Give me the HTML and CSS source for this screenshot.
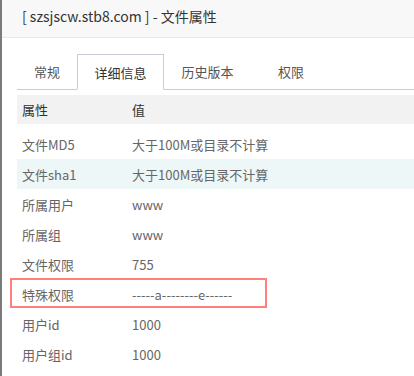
FILE: index.html
```html
<!DOCTYPE html>
<html lang="zh-CN">
<head>
    <meta charset="UTF-8">
    <meta name="viewport" content="width=device-width, initial-scale=1.0">
    <title>文件属性</title>
    <link rel="stylesheet" href="styles.css">
</head>
<body>
    <div class="layer">
        <div class="layer-title">[ szsjscw.stb8.com ] - 文件属性</div>

        <div class="layer-content">
            <ul class="tab-title">
                <li>常规</li>
                <li class="this">详细信息</li>
                <li>历史版本</li>
                <li>权限</li>
            </ul>

            <div class="table">
                <div class="row head">
                    <div class="cell name">属性</div>
                    <div class="cell">值</div>
                </div>
                <div class="body">
                    <div class="row">
                        <div class="cell name">文件MD5</div>
                        <div class="cell">大于100M或目录不计算</div>
                    </div>
                    <div class="row hover">
                        <div class="cell name">文件sha1</div>
                        <div class="cell">大于100M或目录不计算</div>
                    </div>
                    <div class="row">
                        <div class="cell name">所属用户</div>
                        <div class="cell">www</div>
                    </div>
                    <div class="row">
                        <div class="cell name">所属组</div>
                        <div class="cell">www</div>
                    </div>
                    <div class="row">
                        <div class="cell name">文件权限</div>
                        <div class="cell">755</div>
                    </div>
                    <div class="row marked">
                        <div class="cell name">特殊权限</div>
                        <div class="cell">-----a--------e------</div>
                    </div>
                    <div class="row">
                        <div class="cell name">用户id</div>
                        <div class="cell">1000</div>
                    </div>
                    <div class="row">
                        <div class="cell name">用户组id</div>
                        <div class="cell">1000</div>
                    </div>
                </div>
            </div>
        </div>
    </div>
</body>
</html>
```

FILE: styles.css
```css
html, body {
    margin: 0;
    padding: 0;
    background: #fff;
}
body {
    font-family: "Noto Sans CJK SC", "Noto Sans", sans-serif;
    color: #666;
}
.layer {
    height: 376px;
    border-left: 2px solid #7a7a7a;
    box-sizing: border-box;
    overflow: hidden;
}
.layer-title {
    height: 37px;
    line-height: 33px;
    padding-left: 20px;
    font-size: 14px;
    color: #333;
    background-color: #f8f8f8;
    border-bottom: 1px solid #e8e8e8;
}
.layer-content {
    padding: 16px 0 0 15px;
}
.tab-title {
    list-style: none;
    margin: 0;
    padding: 0;
    display: flex;
    height: 35px;
    border-bottom: 1px solid #cdc9da;
}
.tab-title li {
    width: 60px;
    text-align: center;
    font-size: 13px;
    line-height: 36px;
    color: #555;
    box-sizing: border-box;
}
.tab-title li:nth-child(2),
.tab-title li:nth-child(3) {
    width: 87px;
}
.tab-title li:nth-child(4) {
    width: 80px;
}
.tab-title .this {
    color: #333;
    background: #fff;
    border: 1px solid #cdc9da;
    border-bottom-color: #fff;
    height: 36px;
}
.table {
    margin-top: 5px;
    font-size: 13px;
}
.row {
    display: flex;
    height: 30px;
    align-items: center;
}
.head {
    height: 29px;
    background-color: #f2f2f2;
    color: #333;
}
.body {
    padding-top: 5px;
}
.cell {
    padding-left: 5px;
}
.cell.name {
    width: 105px;
}
.hover {
    background-color: #eef7f7;
}
.marked {
    position: relative;
}
.marked::after {
    content: "";
    position: absolute;
    left: -7px;
    top: -1px;
    width: 257px;
    height: 30px;
    border: 2px solid #ff7f7c;
    box-sizing: border-box;
}
```
